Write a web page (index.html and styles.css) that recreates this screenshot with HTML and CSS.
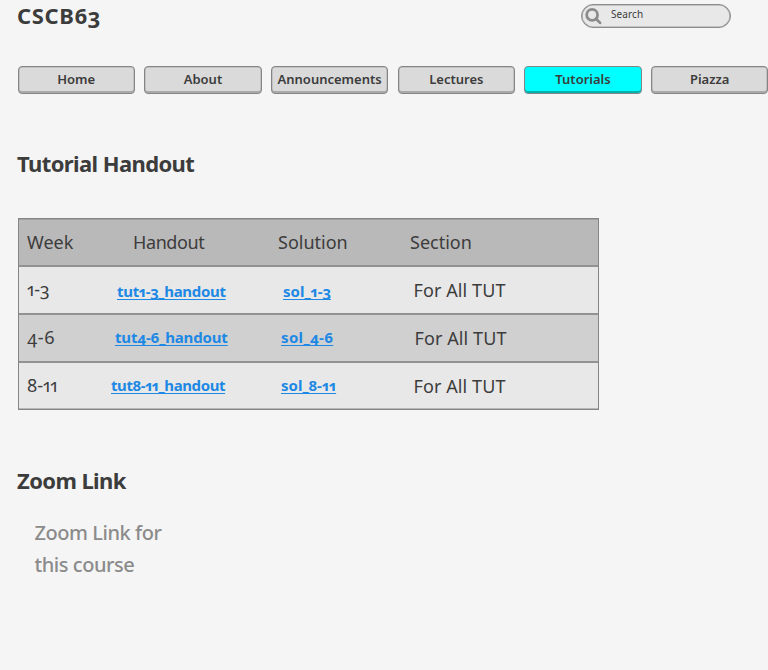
FILE: index.html
```
<!DOCTYPE html>
<html lang="en">
<head>
<meta charset="utf-8">
<title>CSCB63</title>
<link rel="stylesheet" href="styles.css">
</head>
<body>
<header class="top">
  <h1 class="brand">CSCB63</h1>
  <div class="search">
    <svg class="search-icon" viewBox="0 0 16 16"><circle cx="6.7" cy="6.5" r="5.1"/><path d="M10.3 10.2 14.2 14"/></svg>
    <span>Search</span>
  </div>
</header>
<nav class="nav">
  <a class="tab">Home</a>
  <a class="tab">About</a>
  <a class="tab">Announcements</a>
  <a class="tab">Lectures</a>
  <a class="tab tab-active">Tutorials</a>
  <a class="tab">Piazza</a>
</nav>
<main>
  <h2 class="title">Tutorial Handout</h2>
  <div class="table">
    <div class="row head"><span class="week">Week</span><span class="handout">Handout</span><span class="solution">Solution</span><span class="section">Section</span></div>
    <div class="row first"><span class="week">1-3</span><a class="handout">tut1-3_handout</a><a class="solution">sol_1-3</a><span class="section">For All TUT</span></div>
    <div class="row second"><span class="week">4-6</span><a class="handout">tut4-6_handout</a><a class="solution">sol_4-6</a><span class="section">For All TUT</span></div>
    <div class="row third"><span class="week">8-11</span><a class="handout">tut8-11_handout</a><a class="solution">sol_8-11</a><span class="section">For All TUT</span></div>
  </div>
  <h2 class="title zoom-title">Zoom Link</h2>
  <p class="zoom-text">Zoom Link for<br>this course</p>
</main>
</body>
</html>
```

FILE: styles.css
```
* { box-sizing: border-box; }
body {
  margin: 0;
  height: 670px;
  overflow: hidden;
  background: #f5f5f5;
  color: #3c3c3c;
  font-family: "Noto Sans", "Open Sans", sans-serif;
  font-variant-numeric: oldstyle-nums proportional-nums;
}
h1, h2, p { margin: 0; }
.top { display: flex; justify-content: space-between; height: 66px; padding: 4px 37px 0 17px; }
.brand { font-size: 22px; line-height: 22px; font-weight: 700; letter-spacing: .6px; }
.search {
  display: flex;
  width: 150px;
  height: 24px;
  padding-left: 2px;
  border: 1px solid #8b8b8b;
  border-radius: 12px;
  background: #e8e8e8;
  box-shadow: inset 0 0 0 .6px #a0a0a0;
  font-size: 10px;
  line-height: 19px;
  letter-spacing: .1px;
}
.search-icon { width: 17px; height: 17px; margin: 3px 9px 0 1px; fill: none; stroke: #8b8b8b; stroke-width: 2.6; stroke-linecap: round; }
.nav { display: flex; gap: 9.4px; width: 775px; padding-left: 17.6px; }
.tab {
  flex: 0 0 117.3px;
  height: 28px;
  border: 1px solid #858585;
  border-radius: 4px;
  background: #dadada;
  box-shadow: inset 0 -2px #aaa, inset 0 0 0 .5px #aaa;
  font-size: 13px;
  font-weight: 600;
  line-height: 24px;
  text-align: center;
}
.tab-active { background: #0ff; box-shadow: inset 0 -2px #00b2b2; }
.title { margin: 57px 0 0 17px; font-size: 22px; line-height: 24px; font-weight: 700; letter-spacing: -.6px; }
.table { width: 581px; height: 192px; margin: 43px 0 0 18px; border: 1px solid #858585; box-shadow: inset 0 0 0 1px #b0b0b0; }
.row { display: grid; grid-template-columns: 84px 167px 132px 1fr; justify-items: start; height: 48px; padding-left: 8px; border-top: 2px solid #929292; background: #e8e8e8; font-size: 18px; line-height: 46px; }
.head { height: 46px; background: #b9b9b9; border-top: 1px solid #a0a0a0; line-height: 44px; }
.second { background: #d0d0d0; }
.third { box-shadow: inset 0 -1px #b8b8b8; }
.row a { color: #1e88e5; font-size: 15px; font-weight: 700; text-decoration: underline; text-decoration-thickness: 1px; text-underline-offset: 2px; text-decoration-skip-ink: none; line-height: 45px; }
.row .week { line-height: 44px; }
.head .handout { padding-left: 22px; letter-spacing: -.4px; }
.first a { padding-top: 2px; line-height: 44px; }
.first .handout { padding-left: 6px; letter-spacing: -.3px; }
.first .solution { padding-left: 5px; }
.first .section, .third .section { padding-left: 3.5px; letter-spacing: .1px; }
.second .week { letter-spacing: .6px; }
.second .handout { padding-left: 4px; letter-spacing: -.15px; }
.second .solution { padding-left: 3px; letter-spacing: .35px; }
.second .section { padding-left: 4.5px; letter-spacing: .1px; }
.third .handout { letter-spacing: -.4px; }
.third .solution { padding-left: 3px; }
.zoom-title { margin-top: 58px; }
.zoom-text { margin: 25px 0 0 34.5px; color: #8b8b8b; font-size: 20px; line-height: 32px; font-weight: 500; letter-spacing: -.45px; }
```
